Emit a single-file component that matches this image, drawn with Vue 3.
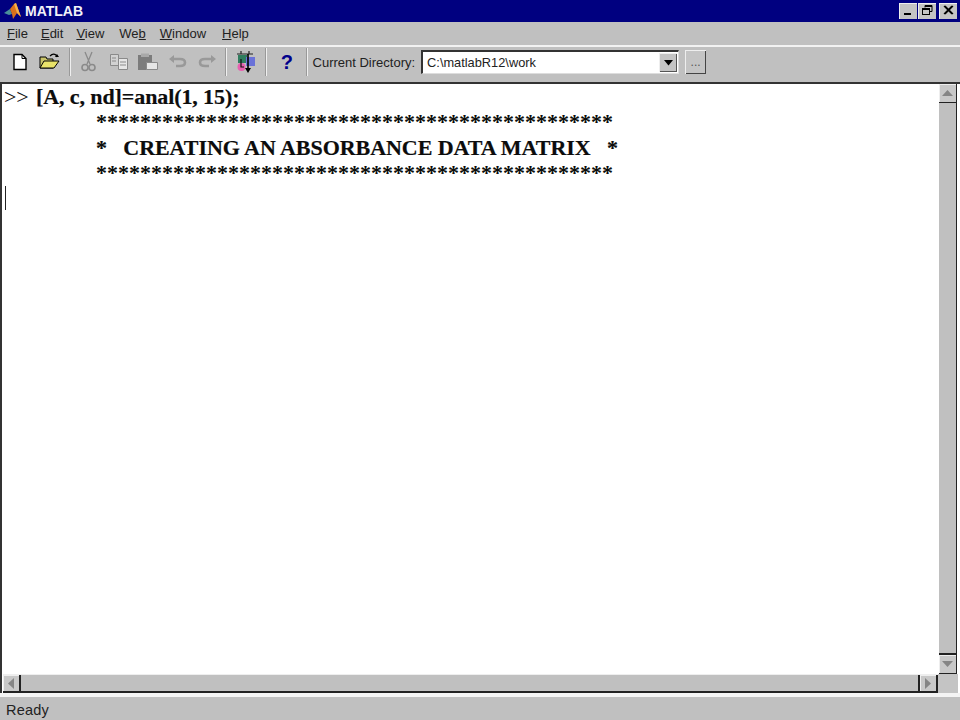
<script setup>
const menus = [
  { key: 'F', rest: 'ile' },
  { key: 'E', rest: 'dit' },
  { key: 'V', rest: 'iew' },
  { pre: 'We', key: 'b', rest: '' },
  { key: 'W', rest: 'indow' },
  { key: 'H', rest: 'elp' },
]
const stars = '*'.repeat(47)
const caption = '*   CREATING AN ABSORBANCE DATA MATRIX   *'
const promptText = '>> '
</script>

<template>
  <div class="window">
    <header class="titlebar">
      <svg class="logo" width="20" height="18" viewBox="0 0 20 18">
        <path d="M1 11 L7 7 L9 12 L6 13 Z" fill="#4a8f9a" />
        <path d="M7 7 L11 2 L13 1 L18 15 L14 11 L10 17 L9 12 Z" fill="#d9701c" />
        <path d="M11 2 L13 1 L18 15 L14 11 Z" fill="#f4b04a" />
      </svg>
      <span class="title">MATLAB</span>
      <div class="winbtns">
        <button class="winbtn"><svg width="17" height="15" viewBox="0 0 17 15"><rect x="4" y="10" width="7" height="2" fill="#000" /></svg></button>
        <button class="winbtn"><svg width="17" height="15" viewBox="0 0 17 15"><path d="M6 2.5h7v6h-2M6 2.5v2M6 3.5h7" fill="none" stroke="#000" /><rect x="3.5" y="5.5" width="7" height="6" fill="none" stroke="#000" /><path d="M3.5 6.5h7" stroke="#000" /></svg></button>
        <button class="winbtn gap"><svg width="17" height="15" viewBox="0 0 17 15"><path d="M4 3l8 8M5 3l8 8M12 3l-8 8M13 3l-8 8" stroke="#000" stroke-width="1.2" /></svg></button>
      </div>
    </header>

    <nav class="menubar">
      <span v-for="m in menus" :key="m.key + m.rest" class="menu">{{ m.pre }}<u>{{ m.key }}</u>{{ m.rest }}</span>
    </nav>

    <div class="toolbar">
      <button class="tool">
        <svg width="20" height="20" viewBox="0 0 20 20"><path d="M4 2.5h8l4 4v11H4z" fill="#fff" stroke="#000" stroke-width="1.4" /><path d="M12 2.5v4h4" fill="none" stroke="#000" /></svg>
      </button>
      <button class="tool">
        <svg width="22" height="20" viewBox="0 0 22 20"><path d="M2 5h6l1 2h6v9H2z" fill="#c9c46a" stroke="#000" /><path d="M2 16l4-7h15l-5 7z" fill="#e9e36a" stroke="#000" /><path d="M12 4q3-3 6-1l1 2" fill="none" stroke="#000" stroke-width="1.3" /><path d="M17 5h4l-2-3z" fill="#000" /></svg>
      </button>
      <i class="sep s1"></i>
      <button class="tool">
        <svg width="20" height="22" viewBox="0 0 20 22"><path d="M6 1l5 12M13 1L8 13" stroke="#8a8a8a" stroke-width="1.3" fill="none" /><circle cx="6" cy="16.5" r="3" fill="none" stroke="#8a8a8a" stroke-width="1.6" /><circle cx="13" cy="16.5" r="3" fill="none" stroke="#8a8a8a" stroke-width="1.6" /></svg>
      </button>
      <button class="tool">
        <svg width="20" height="20" viewBox="0 0 20 20"><path d="M1.5 2.5h8v11h-8z" fill="#d2d2d2" stroke="#8a8a8a" /><path d="M9.5 6.5h9v11h-9z" fill="#e6e6e6" stroke="#8a8a8a" /><path d="M3 6h4M3 9h4M11 10h6M11 13h6" stroke="#8a8a8a" /></svg>
      </button>
      <button class="tool">
        <svg width="22" height="20" viewBox="0 0 22 20"><path d="M1 3h14v15H1z" fill="#7c7c7c" /><path d="M4 1.5h8v3.5H4z" fill="#a8a8a8" /><path d="M9.5 10.5h11v7h-11z" fill="#e6e6e6" stroke="#8a8a8a" /></svg>
      </button>
      <button class="tool">
        <svg width="20" height="20" viewBox="0 0 20 20"><path d="M5 7h7q5 0 5 3.5T12 14H8" fill="none" stroke="#999" stroke-width="2.6" /><path d="M6 3L1 7l5 4z" fill="#999" /></svg>
      </button>
      <button class="tool">
        <svg width="20" height="20" viewBox="0 0 20 20"><path d="M15 7H8q-5 0-5 3.5T8 14h4" fill="none" stroke="#999" stroke-width="2.6" /><path d="M14 3l5 4-5 4z" fill="#999" /></svg>
      </button>
      <i class="sep s2"></i>
      <button class="tool">
        <svg width="22" height="24" viewBox="0 0 22 24"><rect x="3" y="5" width="9" height="8" fill="#2f7d5e" /><rect x="11" y="7" width="9" height="9" fill="#6a72d8" /><circle cx="6.5" cy="17" r="4" fill="#e860b0" /><path d="M2 4h16M6 1v3M14 1v3" stroke="#222" stroke-width="1.2" /><path d="M6 9v8h3" fill="none" stroke="#111" stroke-width="1.2" /><path d="M13 4v16" stroke="#000" stroke-width="1.6" /><path d="M10 18l3 5 3-5z" fill="#000" /></svg>
      </button>
      <i class="sep s3"></i>
      <button class="tool help">?</button>
      <i class="sep s4"></i>
      <label class="dirlabel">Current Directory:</label>
      <div class="combo">
        <span class="path">C:\matlabR12\work</span>
        <span class="drop"><svg width="9" height="6" viewBox="0 0 9 6"><path d="M0 0h9L4.5 5.5z" fill="#000" /></svg></span>
      </div>
      <button class="browse">...</button>
    </div>

    <main class="console">
      <div class="body">
        <section class="output">
          <div class="line first"><span class="prompt">{{ promptText }}</span>[A, c, nd]=anal(1, 15);</div>
          <div class="line indent starrow">{{ stars }}</div>
          <div class="line indent cap">{{ caption }}</div>
          <div class="line indent starrow">{{ stars }}</div>
          <div class="caret"></div>
        </section>
        <div class="vscroll">
          <button class="sbtn"><svg width="11" height="6" viewBox="0 0 11 6"><path d="M5.5 0L11 6H0z" fill="#858585" /></svg></button>
          <div class="vtrack"></div>
          <button class="sbtn"><svg width="11" height="6" viewBox="0 0 11 6"><path d="M0 0h11L5.5 6z" fill="#858585" /></svg></button>
        </div>
      </div>
      <div class="hscroll">
        <div class="hbar">
          <button class="hbtn left"><svg width="6" height="11" viewBox="0 0 6 11"><path d="M6 0v11L0 5.5z" fill="#858585" /></svg></button>
          <div class="htrack"></div>
          <button class="hbtn right"><svg width="6" height="11" viewBox="0 0 6 11"><path d="M0 0v11l6-5.5z" fill="#858585" /></svg></button>
        </div>
        <div class="corner"></div>
      </div>
    </main>

    <footer class="status">Ready</footer>
  </div>
</template>

<style scoped>
.window {
  width: 960px;
  height: 720px;
  display: flex;
  flex-direction: column;
  overflow: hidden;
  background: #f4f4f4;
  font-family: "Liberation Sans", Arial, sans-serif;
  color: #111;
}
button {
  padding: 0;
  margin: 0;
  border: 0;
  background: none;
  font-family: inherit;
}
.titlebar {
  flex: 0 0 22px;
  display: flex;
  align-items: center;
  background: #000080;
  padding-left: 3px;
  padding-right: 3px;
}
.logo { margin-right: 2px; }
.title {
  color: #f2f2f8;
  font-weight: 700;
  font-size: 14px;
}
.winbtns { margin-left: auto; display: flex; margin-top: -1px; }
.winbtn {
  width: 18px;
  height: 16px;
  margin-left: 1px;
  background: #c4c4c4;
  box-shadow: inset 1px 1px 0 #eee;
  display: flex;
  align-items: center;
  justify-content: center;
}
.winbtn.gap { margin-left: 3px; }
.menubar {
  flex: 0 0 23px;
  background: #c0c0c0;
  display: flex;
  align-items: center;
  padding-left: 7px;
  font-size: 13px;
  color: #222;
}
.menu { margin-right: 13px; }
.menu:nth-child(3) { margin-right: 15px; }
.menu:nth-child(4) { margin-right: 14px; }
.menu:nth-child(5) { margin-right: 16px; }
.toolbar {
  flex: 0 0 30px;
  box-sizing: content-box;
  border-top: 2px solid #f2f2f2;
  border-bottom: 2px solid #333;
  background: #c0c0c0;
  display: flex;
  align-items: center;
  padding: 0 0 5px 5px;
  height: 30px;
}
.tool {
  flex: 0 0 29.4px;
  height: 28px;
  display: flex;
  align-items: center;
  justify-content: center;
}
.sep {
  flex: 0 0 2px;
  height: 28px;
  background: linear-gradient(90deg, #999 50%, #efefef 50%);
}
.s1 { margin: 0 4px 0 5px; }
.s2 { margin: 0 5px 0 3px; }
.s3 { margin: 0 5px 0 4px; }
.s4 { margin: 0 5px 0 4px; }
.help {
  color: #00008b;
  font-weight: 700;
  font-size: 20px;
}
.dirlabel {
  font-size: 13px;
  color: #222;
  margin-right: 6px;
  white-space: nowrap;
}
.combo {
  width: 258px;
  height: 24px;
  box-sizing: border-box;
  background: #fff;
  border: 1px solid #333;
  border-top-width: 2px;
  border-left-width: 2px;
  border-bottom-color: #ddd;
  border-right-color: #ddd;
  display: flex;
  align-items: center;
  justify-content: space-between;
  padding: 0 1px 0 4px;
}
.path { font-size: 12.8px; color: #222; white-space: pre; }
.drop {
  width: 18px;
  height: 19px;
  background: #c4c4c4;
  box-shadow: inset 1px 1px 0 #eee, inset -1px -1px 0 #555;
  display: flex;
  align-items: center;
  justify-content: center;
}
.browse {
  width: 21px;
  height: 24px;
  margin-left: 6px;
  background: #c4c4c4;
  box-shadow: inset 1px 1px 0 #eee, inset -1px -1px 0 #444;
  font-size: 12px;
  color: #555;
}
.console {
  flex: 0 0 609px;
  display: flex;
  flex-direction: column;
  background: #fff;
  padding-left: 2px;
  box-sizing: border-box;
  background-image: linear-gradient(90deg, #333 2px, transparent 2px);
}
.body { flex: 1; display: flex; min-height: 0; }
.output {
  flex: 1;
  padding: 0 0 0 2px;
  font-family: "Liberation Serif", "Times New Roman", serif;
  font-size: 22px;
  font-weight: 700;
  color: #0c0c0c;
  -webkit-text-stroke: 0.2px #0c0c0c;
}
.line {
  white-space: pre;
}
.first { height: 25px; line-height: 26px; letter-spacing: -0.1px; }
.starrow { height: 26px; line-height: 26px; -webkit-text-stroke: 0; }
.cap { height: 25px; line-height: 26px; letter-spacing: -0.05px; }
.prompt {
  font-weight: 400;
  margin-right: 2px;
  -webkit-text-stroke: 0;
}
.indent { padding-left: 92px; }
.caret {
  width: 1px;
  height: 24px;
  margin-left: 1px;
  background: #222;
}
.vscroll {
  flex: 0 0 18px;
  margin-right: 3px;
  display: flex;
  flex-direction: column;
  background: #c0c0c0;
  border-right: 1px solid #222;
  box-sizing: border-box;
}
.sbtn {
  flex: 0 0 19px;
  background: #c8c8c8;
  box-shadow: inset 1px 1px 0 #eee;
  border-bottom: 1px solid #222;
  display: flex;
  align-items: center;
  justify-content: center;
}
.vtrack { flex: 1; border-bottom: 2px solid #222; }
.hscroll {
  flex: 0 0 19px;
  display: flex;
  margin-left: 1px;
}
.hbar {
  flex: 1;
  display: flex;
  background: #c0c0c0;
  border-top: 1px solid #eee;
  border-bottom: 2px solid #222;
}
.hbtn {
  flex: 0 0 18px;
  background: #c8c8c8;
  box-shadow: inset 1px 1px 0 #eee;
  display: flex;
  align-items: center;
  justify-content: center;
}
.hbtn.left { border-right: 2px solid #222; }
.hbtn.right { border-left: 2px solid #222; border-right: 2px solid #222; flex-basis: 20px; }
.htrack { flex: 1; }
.corner { flex: 0 0 20px; background: #c4c4c4; margin-right: 2px; }
.status {
  flex: 1;
  margin-top: 4px;
  background: #c0c0c0;
  font-size: 14.5px;
  letter-spacing: 0.2px;
  line-height: 26px;
  padding-left: 6px;
  color: #222;
}
</style>
